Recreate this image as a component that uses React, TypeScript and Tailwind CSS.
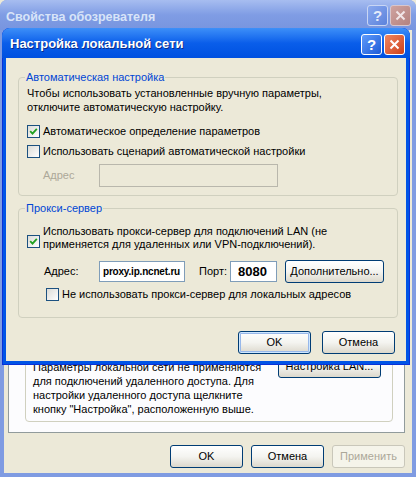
import type { ReactNode } from 'react';

function Check({ checked }: { checked?: boolean }) {
    return (
        <span className="flex h-[13px] w-[13px] shrink-0 items-center justify-center border border-[#1c5180] bg-gradient-to-br from-[#dcdcd7] to-[#ffffff]">
            {checked && (
                <svg width="9" height="9" viewBox="0 0 9 9">
                    <path d="M1.2 4.2 L3.5 6.6 L7.8 1.8" stroke="#21a121" strokeWidth="1.8" fill="none" />
                </svg>
            )}
        </span>
    );
}

function Btn({ children, w, isDefault, disabled }: { children: ReactNode; w: string; isDefault?: boolean; disabled?: boolean }) {
    if (disabled) {
        return (
            <div className={`flex h-[23px] items-center justify-center rounded-[3px] border border-[#c9c7ba] bg-[#f5f4ea] text-[#aca899] ${w}`}>
                {children}
            </div>
        );
    }
    return (
        <div
            className={`flex h-[23px] items-center justify-center rounded-[3px] border border-[#003c74] bg-gradient-to-b from-[#ffffff] via-[#f4f4f0] to-[#dcd8cc] ${w} ${
                isDefault ? 'shadow-[inset_0_0_0_1px_#cee7ff,inset_0_0_0_2px_#98b8ea]' : ''
            }`}
        >
            {children}
        </div>
    );
}

function CapBtn({ kind, active }: { kind: 'help' | 'close'; active?: boolean }) {
    if (kind === 'help') {
        return (
            <div
                className={`flex h-[21px] w-[21px] items-center justify-center rounded-[3px] border text-[15px] font-bold leading-none ${
                    active
                        ? 'border-white bg-gradient-to-br from-[#5f9bfb] to-[#1d5ad6] text-white'
                        : 'border-[#c9d6f4] bg-gradient-to-br from-[#8aa9ee] to-[#5c82dc] text-[#e4ebfa]'
                }`}
            >
                ?
            </div>
        );
    }
    return (
        <div
            className={`flex h-[21px] w-[21px] items-center justify-center rounded-[3px] border ${
                active
                    ? 'border-white bg-gradient-to-br from-[#f0865f] to-[#cc3f18]'
                    : 'border-[#d8c6cc] bg-gradient-to-br from-[#cfa3a0] to-[#b4827f]'
            }`}
        >
            <svg width="11" height="11" viewBox="0 0 11 11">
                <path d="M1.5 1.5 L9.5 9.5 M9.5 1.5 L1.5 9.5" stroke={active ? '#ffffff' : '#f1e6e8'} strokeWidth="2" />
            </svg>
        </div>
    );
}

export default function App() {
    return (
        <div className="relative h-[477px] w-[416px] overflow-hidden bg-[#ece9d8] font-[family-name:'Liberation_Sans',Arial,sans-serif] text-[11px] text-black">
            {/* Back window: Свойства обозревателя (inactive) */}
            <div className="flex h-full w-full flex-col rounded-t-[7px] bg-[#7f9be2]">
                <div className="flex h-[30px] shrink-0 items-start rounded-t-[7px] bg-gradient-to-b from-[#a7bdf0] via-[#7f9ce4] to-[#7895df] pl-[6px] pr-[5px] pt-[5px]">
                    <span className="flex-1 pt-[3px] text-[12.5px] font-bold text-[#d8e4f8]">Свойства обозревателя</span>
                    <div className="flex gap-[2px]">
                        <CapBtn kind="help" />
                        <CapBtn kind="close" />
                    </div>
                </div>
                <div className="mx-[4px] mb-[4px] flex flex-1 flex-col bg-[#ece9d8]">
                    {/* tab page */}
                    <div className="ml-[4px] mr-[7px] mt-[20px] flex flex-1 flex-col justify-end border border-[#919b9c] bg-[#fcfcfe]">
                        <div className="mb-[10px] ml-[16px] mr-[11px] flex items-start rounded-[4px] border border-[#d0d0bf] pb-[5px] pl-[7px] pr-[11px] pt-[6px]">
                            <p className="mt-[5px] flex-1 leading-[14px]">
                                Параметры локальной сети не применяются
                                <br />
                                для подключений удаленного доступа. Для
                                <br />
                                настройки удаленного доступа щелкните
                                <br />
                                кнопку "Настройка", расположенную выше.
                            </p>
                            <Btn w="w-[103px]">Настройка LAN...</Btn>
                        </div>
                    </div>
                    <div className="flex justify-end gap-[8px] pb-[5px] pr-[7px] pt-[12px]">
                        <Btn w="w-[73px]">OK</Btn>
                        <Btn w="w-[73px]">Отмена</Btn>
                        <Btn w="w-[73px]" disabled>
                            Применить
                        </Btn>
                    </div>
                </div>
            </div>

            {/* Front dialog: Настройка локальной сети (active) */}
            <div className="absolute left-[2px] top-[28px] flex h-[337px] w-[408px] flex-col rounded-t-[8px] bg-[#0054e6] shadow-[inset_0_0_0_1px_#0831d9]">
                <div className="flex h-[30px] shrink-0 items-center rounded-t-[8px] bg-gradient-to-b from-[#3d8ff8] via-[#0a5eea] to-[#0050e0] pl-[8px] pr-[5px] pt-[2px]">
                    <span className="flex-1 text-[13px] font-bold text-white [text-shadow:1px_1px_0_#0c2d8a]">Настройка локальной сети</span>
                    <div className="flex gap-[2px]">
                        <CapBtn kind="help" active />
                        <CapBtn kind="close" active />
                    </div>
                </div>
                <div className="mx-[4px] mb-[4px] flex flex-1 flex-col bg-[#ece9d8]">
                    {/* Автоматическая настройка */}
                    <fieldset className="ml-[12px] mr-[8px] mt-[12px] flex flex-col rounded-[4px] border border-[#d0d0bf] pb-[8px] pl-[8px] pr-[8px] pt-[2px]">
                        <legend className="-ml-[2px] px-[1px] leading-[14px] text-[#0046d5]">Автоматическая настройка</legend>
                        <p className="leading-[14px]">
                            Чтобы использовать установленные вручную параметры,
                            <br />
                            отключите автоматическую настройку.
                        </p>
                        <div className="mt-[11px] flex h-[13px] items-center gap-[3px]">
                            <Check checked />
                            <span>Автоматическое определение параметров</span>
                        </div>
                        <div className="mt-[7px] flex h-[13px] items-center gap-[3px]">
                            <Check />
                            <span>Использовать сценарий автоматической настройки</span>
                        </div>
                        <div className="ml-[16px] mt-[6px] flex items-center">
                            <span className="w-[56px] text-[#aca899]">Адрес</span>
                            <div className="h-[23px] w-[179px] border border-[#b9b7ac] bg-[#ece9d8]" />
                        </div>
                    </fieldset>

                    {/* Прокси-сервер */}
                    <fieldset className="ml-[12px] mr-[8px] mt-[5px] flex flex-col rounded-[4px] border border-[#d0d0bf] pb-[16px] pl-[8px] pr-[8px] pt-[10px]">
                        <legend className="-ml-[2px] px-[1px] leading-[14px] text-[#0046d5]">Прокси-сервер</legend>
                        <div className="flex items-start gap-[3px]">
                            <span className="mt-[10px]">
                                <Check checked />
                            </span>
                            <span className="leading-[13px]">
                                Использовать прокси-сервер для подключений LAN (не
                                <br />
                                применяется для удаленных или VPN-подключений).
                            </span>
                        </div>
                        <div className="ml-[17px] mt-[10px] flex h-[21px] items-center">
                            <span className="w-[55px]">Адрес:</span>
                            <div className="flex h-[21px] w-[86px] items-center border border-[#7f9db9] bg-white pl-[3px] text-[10px] font-bold tracking-[-0.2px]">
                                proxy.ip.ncnet.ru
                            </div>
                            <span className="ml-[14px] w-[31px]">Порт:</span>
                            <div className="flex h-[21px] w-[47px] items-center border border-[#7f9db9] bg-white pl-[7px] text-[13px] font-bold">
                                8080
                            </div>
                            <div className="ml-[8px]">
                                <Btn w="w-[99px]">Дополнительно...</Btn>
                            </div>
                        </div>
                        <div className="ml-[19px] mt-[6px] flex h-[13px] items-center gap-[3px]">
                            <Check />
                            <span>Не использовать прокси-сервер для локальных адресов</span>
                        </div>
                    </fieldset>

                    <div className="mt-[13px] flex justify-end gap-[11px] pr-[11px]">
                        <Btn w="w-[73px]" isDefault>
                            OK
                        </Btn>
                        <Btn w="w-[73px]">Отмена</Btn>
                    </div>
                </div>
            </div>
        </div>
    );
}
